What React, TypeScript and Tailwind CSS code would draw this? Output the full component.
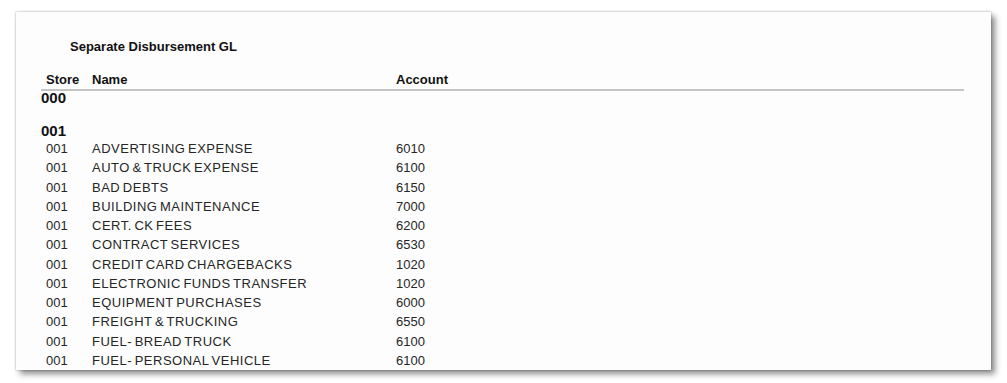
const rows = [
  { name: 'ADVERTISING EXPENSE', account: '6010' },
  { name: 'AUTO & TRUCK EXPENSE', account: '6100' },
  { name: 'BAD DEBTS', account: '6150' },
  { name: 'BUILDING MAINTENANCE', account: '7000' },
  { name: 'CERT. CK FEES', account: '6200' },
  { name: 'CONTRACT SERVICES', account: '6530' },
  { name: 'CREDIT CARD CHARGEBACKS', account: '1020' },
  { name: 'ELECTRONIC FUNDS TRANSFER', account: '1020' },
  { name: 'EQUIPMENT PURCHASES', account: '6000' },
  { name: 'FREIGHT & TRUCKING', account: '6550' },
  { name: 'FUEL- BREAD TRUCK', account: '6100' },
  { name: 'FUEL- PERSONAL VEHICLE', account: '6100' },
];

export default function App() {
  return (
    <div className="w-[1007px] h-[383px] bg-white pt-[12px] pl-[16px] overflow-hidden font-['Liberation_Sans',Arial,sans-serif]">
      <div className="w-[975px] h-[358px] bg-[#fdfdfd] overflow-hidden shadow-[0_0_2px_rgba(0,0,0,0.35),4px_4px_6px_rgba(0,0,0,0.45)] pt-[27px]">
        <div className="pl-[54px] h-[16px] leading-[16px] text-[13px] font-bold text-[#111]">
          Separate Disbursement GL
        </div>

        <div className="pl-[25px] pr-[27px] mt-[16.5px]">
          <div className="grid grid-cols-[46px_304px_1fr] pl-[5px] h-[16px] leading-[16px] text-[13px] font-bold text-[#111]">
            <span>Store</span>
            <span>Name</span>
            <span>Account</span>
          </div>
          <div className="mt-[1px] h-[2px] bg-[#c4c4c4]" />

          <div className="mt-[1px] h-[12px] leading-[12px] text-[15px] font-bold text-[#111]">000</div>
          <div className="mt-[21px] h-[12px] leading-[12px] text-[15px] font-bold text-[#111]">001</div>

          <div className="mt-[2.5px]">
            {rows.map((r) => (
              <div
                key={r.name}
                className="grid grid-cols-[46px_304px_1fr] pl-[5px] h-[19.25px] leading-[19.25px] text-[13px] text-[#262626]"
              >
                <span>001</span>
                <span className="tracking-[0.5px] [word-spacing:-1.5px]">{r.name}</span>
                <span>{r.account}</span>
              </div>
            ))}
          </div>
        </div>
      </div>
    </div>
  );
}
